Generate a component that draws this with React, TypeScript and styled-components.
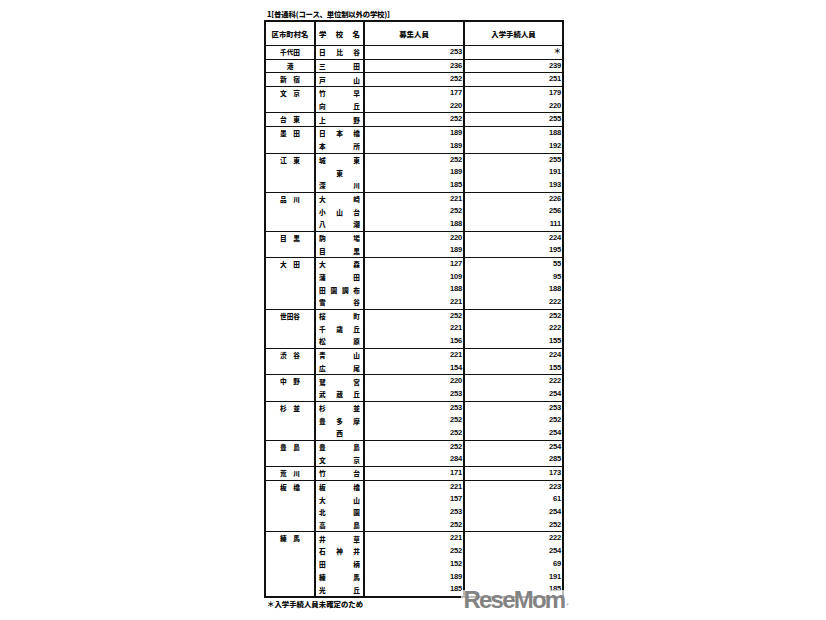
import React from "react";
import styled, { createGlobalStyle } from "styled-components";

const GlobalStyle = createGlobalStyle`
  html, body { margin: 0; padding: 0; background: #ffffff; }
  body { font-family: "Liberation Sans", "Noto Sans CJK JP", sans-serif; color: #0d0d0d; }
`;

type School = { name: string; quota: string; enrolled: string };
type Group = { district: string; schools: School[] };

const s = (name: string, quota: string, enrolled: string): School => ({ name, quota, enrolled });

const groups: Group[] = [
  { district: "千代田", schools: [s("日比谷", "253", "＊")] },
  { district: "港", schools: [s("三田", "236", "239")] },
  { district: "新　宿", schools: [s("戸山", "252", "251")] },
  { district: "文　京", schools: [s("竹早", "177", "179"), s("向丘", "220", "220")] },
  { district: "台　東", schools: [s("上野", "252", "255")] },
  { district: "墨　田", schools: [s("日本橋", "189", "188"), s("本所", "189", "192")] },
  { district: "江　東", schools: [s("城東", "252", "255"), s("東", "189", "191"), s("深川", "185", "193")] },
  { district: "品　川", schools: [s("大崎", "221", "226"), s("小山台", "252", "256"), s("八潮", "188", "111")] },
  { district: "目　黒", schools: [s("駒場", "220", "224"), s("目黒", "189", "195")] },
  { district: "大　田", schools: [s("大森", "127", "55"), s("蒲田", "109", "95"), s("田園調布", "188", "188"), s("雪谷", "221", "222")] },
  { district: "世田谷", schools: [s("桜町", "252", "252"), s("千歳丘", "221", "222"), s("松原", "156", "155")] },
  { district: "渋　谷", schools: [s("青山", "221", "224"), s("広尾", "154", "155")] },
  { district: "中　野", schools: [s("鷺宮", "220", "222"), s("武蔵丘", "253", "254")] },
  { district: "杉　並", schools: [s("杉並", "253", "253"), s("豊多摩", "252", "252"), s("西", "252", "254")] },
  { district: "豊　島", schools: [s("豊島", "252", "254"), s("文京", "284", "285")] },
  { district: "荒　川", schools: [s("竹台", "171", "173")] },
  { district: "板　橋", schools: [s("板橋", "221", "223"), s("大山", "157", "61"), s("北園", "253", "254"), s("高島", "252", "252")] },
  { district: "練　馬", schools: [s("井草", "221", "222"), s("石神井", "252", "254"), s("田柄", "152", "69"), s("練馬", "189", "191"), s("光丘", "185", "185")] },
];

const LINE = "#111111";
const COLS = "50px 49px 100px 97px";
const ROW_H = 12.7;

const Page = styled.div`
  width: 826px;
  min-height: 620px;
  display: flex;
  flex-direction: column;
  align-items: center;
  padding-top: 9px;
  box-sizing: border-box;
`;

const Sheet = styled.div`
  position: relative;
  width: 300px;
  margin-left: 2px;
`;

const Title = styled.div`
  font-family: "Noto Sans CJK JP", "Liberation Sans", sans-serif;
  font-weight: 900;
  font-size: 7.4px;
  line-height: 10px;
  height: 10px;
  padding-left: 3px;
  margin-bottom: 1px;
  letter-spacing: -0.2px;
  white-space: nowrap;
`;

const Table = styled.div`
  border: 2px solid ${LINE};
  box-sizing: border-box;
  width: 300px;
`;

const HeaderRow = styled.div`
  display: grid;
  grid-template-columns: ${COLS};
  height: 23px;
`;

const HeaderCell = styled.div<{ $last?: boolean; $spread?: boolean }>`
  display: flex;
  align-items: center;
  justify-content: ${(p) => (p.$spread ? "space-between" : "center")};
  padding: ${(p) => (p.$spread ? "0 3px" : "0")};
  border-right: ${(p) => (p.$last ? "none" : `2px solid ${LINE}`)};
  box-sizing: border-box;
  font-family: "Noto Sans CJK JP", sans-serif;
  font-weight: 900;
  font-size: 7.4px;
  white-space: nowrap;
`;

const GroupBlock = styled.div`
  display: grid;
  grid-template-columns: ${COLS};
  grid-auto-rows: ${ROW_H}px;
  border-top: 1.5px solid ${LINE};
`;

const DistrictCell = styled.div<{ $span: number }>`
  grid-row: 1 / span ${(p) => p.$span};
  grid-column: 1;
  border-right: 2px solid ${LINE};
  box-sizing: border-box;
  text-align: center;
  line-height: ${ROW_H}px;
  font-family: "Noto Sans CJK JP", sans-serif;
  font-weight: 900;
  font-size: 6.7px;
  white-space: pre;
`;

const SchoolCell = styled.div<{ $single: boolean }>`
  grid-column: 2;
  display: flex;
  align-items: center;
  justify-content: ${(p) => (p.$single ? "center" : "space-between")};
  padding: 0 3px;
  border-right: 2px solid ${LINE};
  box-sizing: border-box;
  font-family: "Noto Sans CJK JP", sans-serif;
  font-weight: 900;
  font-size: 6.7px;
`;

const NumCell = styled.div<{ $col: number }>`
  grid-column: ${(p) => p.$col};
  text-align: right;
  padding-right: 1px;
  border-right: ${(p) => (p.$col === 3 ? `2px solid ${LINE}` : "none")};
  box-sizing: border-box;
  line-height: ${ROW_H}px;
  font-family: "Liberation Sans", "Noto Sans CJK JP", sans-serif;
  font-weight: 700;
  font-size: 7.6px;
  letter-spacing: -0.2px;
`;

const Note = styled.div`
  margin-top: 1px;
  padding-left: 3px;
  font-family: "Noto Sans CJK JP", sans-serif;
  font-weight: 900;
  font-size: 7.4px;
  line-height: 10px;
  white-space: nowrap;
`;

const Logo = styled.div`
  position: absolute;
  right: -5px;
  bottom: -1px;
  height: 20px;
  padding: 0 2px 0 3px;
  background: rgba(255, 255, 255, 0.72);
  display: flex;
  align-items: flex-end;
  font-family: "Liberation Sans", "DejaVu Sans", sans-serif;
  font-weight: 700;
  font-size: 24px;
  line-height: 21px;
  letter-spacing: -1.8px;
  color: #838383;
`;

const LogoDot = styled.span`
  font-size: 9px;
  line-height: 9px;
  color: #a0a0a0;
  margin-left: 2px;
  margin-bottom: 3px;
`;

function SchoolName({ name }: { name: string }) {
  const chars = Array.from(name);
  return (
    <SchoolCell $single={chars.length === 1}>
      {chars.map((c, i) => (
        <span key={i}>{c}</span>
      ))}
    </SchoolCell>
  );
}

export default function App() {
  return (
    <>
      <GlobalStyle />
      <Page>
        <Sheet>
          <Title>1[普通科(コース、単位制以外の学校)]</Title>
          <Table>
            <HeaderRow>
              <HeaderCell>区市町村名</HeaderCell>
              <HeaderCell $spread>
                <span>学</span>
                <span>校</span>
                <span>名</span>
              </HeaderCell>
              <HeaderCell>募集人員</HeaderCell>
              <HeaderCell $last>入学手続人員</HeaderCell>
            </HeaderRow>
            {groups.map((g) => (
              <GroupBlock key={g.district}>
                <DistrictCell $span={g.schools.length}>{g.district}</DistrictCell>
                {g.schools.map((sc, i) => (
                  <React.Fragment key={i}>
                    <SchoolName name={sc.name} />
                    <NumCell $col={3}>{sc.quota}</NumCell>
                    <NumCell $col={4}>{sc.enrolled}</NumCell>
                  </React.Fragment>
                ))}
              </GroupBlock>
            ))}
          </Table>
          <Note>＊入学手続人員未確定のため</Note>
          <Logo>
            ReseMom<LogoDot>.</LogoDot>
          </Logo>
        </Sheet>
      </Page>
    </>
  );
}
